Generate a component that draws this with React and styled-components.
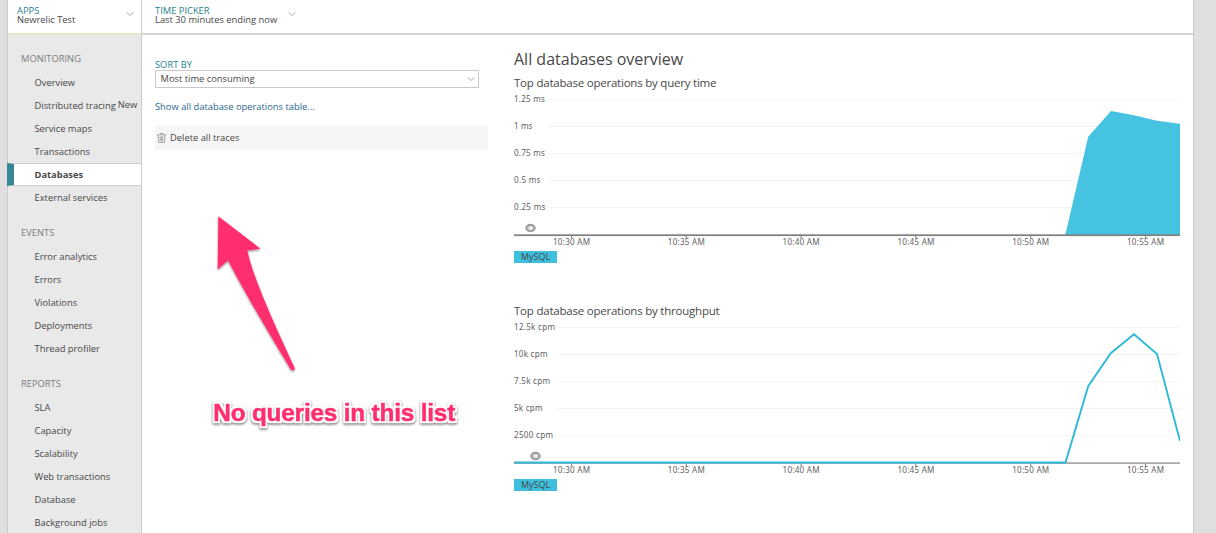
import React from "react";
import styled, { createGlobalStyle, css } from "styled-components";

const GlobalStyle = createGlobalStyle`
  * { box-sizing: border-box; }
  body { margin: 0; background: #dfdfdf; overflow: hidden; }
  body, text { font-family: "Open Sans", "Noto Sans", sans-serif; }
`;

const Page = styled.div`
  display: grid;
  grid-template-columns: 134px 1fr;
  grid-template-rows: 35px 1fr;
  width: 1187px;
  height: 533px;
  margin-left: 7px;
  border: solid #cbcbcb;
  border-width: 0 1px;
  background: #fff;
  color: #484848;
  font-size: 9.35px;
`;

const Picker = styled.header`
  display: flex;
  align-items: flex-start;
  gap: ${(p) => p.$gap}px;
  padding: 6px 0 0 ${(p) => p.$indent}px;
  border-bottom: 2px solid ${(p) => (p.$accent ? "#e2ebc9" : "#d2d2d2")};
  ${(p) => p.$accent && css`border-right: 1px solid #cbcbcb;`}
`;

const PickerText = styled.div`
  width: ${(p) => p.$width}px;
  white-space: nowrap;
`;

const Label = styled.div`
  height: 10px;
  line-height: 10px;
  color: #2a7f90;
  white-space: nowrap;
`;

const PickerValue = styled.div`
  line-height: 8px;
`;

const Chevron = styled.svg`
  display: block;
  width: 8px;
  height: 6px;
  margin-top: ${(p) => p.$top || 0}px;
  margin-left: ${(p) => (p.$top ? -0.5 : 0)}px;
  fill: none;
  stroke: #a8a8a8;
  stroke-width: 1;
`;

const Sidebar = styled.nav`
  background: #e9e9e9;
  border-right: 1px solid #cbcbcb;
  min-height: 0;
`;

const NavHeading = styled.h3`
  height: 36px;
  margin: 0;
  padding: 11px 0 0 13px;
  line-height: 25px;
  font-size: 9.35px;
  font-weight: 400;
  color: #7d7d7d;
`;

const NavItem = styled.a`
  display: flex;
  align-items: center;
  height: 23px;
  padding-left: 26.5px;
  white-space: nowrap;
  ${(p) =>
    p.$active &&
    css`
      margin-left: -1px;
      padding-left: 20.5px;
      border: solid #cfcfcf;
      border-width: 1px 0;
      border-left: 7px solid #358798;
      background: #fff;
      font-weight: 700;
    `}
`;

const NewTag = styled.span`
  margin: -3px 0 0 2px;
`;

const Main = styled.main`
  display: grid;
  grid-template-columns: 333px 666px;
  column-gap: 26px;
  padding-left: 13px;
  min-height: 0;
`;

const ListPane = styled.section`
  padding-top: 25px;
`;

const Select = styled.div`
  display: flex;
  align-items: center;
  justify-content: space-between;
  width: 324px;
  height: 18px;
  padding: 0 3px 1px 4.5px;
  border: 1px solid #c9c9c9;
`;

const Link = styled.a`
  display: block;
  margin-top: 12px;
  height: 14px;
  line-height: 14px;
  color: #2a6791;
`;

const ActionBar = styled.div`
  display: flex;
  align-items: center;
  gap: 4px;
  height: 25px;
  margin-top: 11px;
  padding-left: 2px;
  background: #f6f6f6;
`;

const TrashIcon = styled.svg`
  width: 9px;
  height: 10px;
  fill: none;
  stroke: #949494;
  stroke-width: 0.8;
`;

const Overview = styled.section`
  padding-top: 12px;
`;

const Title = styled.h1`
  height: 25px;
  margin: 0;
  line-height: 24px;
  font-size: 16px;
  font-weight: 400;
`;

const ChartTitle = styled.h2`
  height: 21px;
  margin: 0;
  line-height: 22px;
  font-size: 11.5px;
  letter-spacing: -0.22px;
  font-weight: 400;
  white-space: nowrap;
`;

const ChartBlock = styled.article`
  height: 228px;
`;

const Plot = styled.svg`
  display: block;
  width: 666px;
  height: 158px;
  text {
    font-family: "Noto Sans", sans-serif;
    font-size: 8.1px;
    fill: #626262;
  }
`;

const Legend = styled.div`
  display: flex;
  align-items: center;
  justify-content: center;
  width: 43px;
  height: 12px;
  padding-bottom: 1px;
  background: #3dbfdd;
  font-size: 9px;
`;

const Annotation = styled.svg`
  position: absolute;
  left: 200px;
  top: 205px;
  width: 270px;
  height: 235px;
  pointer-events: none;
`;

const NoteText = styled.text`
  && { font-family: "Liberation Sans", Arial, sans-serif; }
  font-size: 24.3px;
  font-weight: 700;
  fill: #ff2f6e;
  stroke: #ff2f6e;
  stroke-width: 0.5;
`;

const sections = [
  { name: "MONITORING", items: ["Overview", "Distributed tracing", "Service maps", "Transactions", "Databases", "External services"] },
  { name: "EVENTS", items: ["Error analytics", "Errors", "Violations", "Deployments", "Thread profiler"] },
  { name: "REPORTS", items: ["SLA", "Capacity", "Scalability", "Web transactions", "Database", "Background jobs"] },
];

const times = ["10:30 AM", "10:35 AM", "10:40 AM", "10:45 AM", "10:50 AM", "10:55 AM"];

const charts = [
  {
    title: "Top database operations by query time",
    gridStart: 34,
    ringX: 16.5,
    ticks: [["1.25 ms", 31], ["1 ms", 18.5], ["0.75 ms", 31], ["0.5 ms", 26.5], ["0.25 ms", 31.5]],
    area: true,
    points: "551.3,142 574.2,43.8 597,18 620,22.2 643,27.8 666,30.7",
  },
  {
    title: "Top database operations by throughput",
    gridStart: 44,
    ringX: 21.5,
    ticks: [["12.5k cpm", 41], ["10k cpm", 33.5], ["7.5k cpm", 36], ["5k cpm", 28.5], ["2500 cpm", 39]],
    area: false,
    points: "0,141.5 551.5,141.5 574.3,65 597,32 620,13.3 643,33 666,120",
  },
];

function Caret({ top }) {
  return <Chevron $top={top} viewBox="0 0 8 6"><path d="M.7 1.2 4 4.6 7.3 1.2" /></Chevron>;
}

function Chart({ title, ticks, gridStart, ringX, area, points }) {
  return (
    <ChartBlock>
      <ChartTitle>{title}</ChartTitle>
      <Plot viewBox="0 0 666 158">
        {ticks.map(([label, width], i) => (
          <g key={label}>
            <path d={`M${gridStart} ${6.5 + i * 27}H666`} stroke={i % 2 ? "#f3f3f3" : "#f5f5f5"} />
            <text x="0" y={9.2 + i * 27} textLength={width}>{label}</text>
          </g>
        ))}
        {area && <polygon points={points + " 666,142"} fill="#46c3e0" />}
        <rect x="0" y={area ? 141.3 : 141.2} width="666" height="1.8" fill={area ? "#828282" : "#aaa"} />
        {!area && <polyline points={points} fill="none" stroke="#30b8d8" strokeWidth="1.9" />}
        {times.map((time, i) => (
          <g key={time}>
            <path d={`M${57.5 + i * 114.8} 143v2`} stroke="#777" />
            <text x={39 + i * 114.8} y="152.2" textLength="37">{time}</text>
          </g>
        ))}
        <ellipse cx={ringX} cy="135" rx="4.2" ry="3.3" fill="#c9c9c9" stroke="#9b9b9b" strokeWidth="2" />
        <circle cx={ringX + 0.3} cy="135.1" r="1.8" fill="#f2f2f2" />
      </Plot>
      <Legend>MySQL</Legend>
    </ChartBlock>
  );
}

export default function App() {
  return (
    <>
      <GlobalStyle />
      <Page>
        <Picker $accent $indent={9} $gap={9}>
          <PickerText $width={100}>
            <Label>APPS</Label>
            <PickerValue>Newrelic Test</PickerValue>
          </PickerText>
          <Caret top={5} />
        </Picker>
        <Picker $indent={13} $gap={9}>
          <PickerText $width={124}>
            <Label>TIME PICKER</Label>
            <PickerValue>Last 30 minutes ending now</PickerValue>
          </PickerText>
          <Caret top={5} />
        </Picker>
        <Sidebar>
          {sections.map((section) => (
            <div key={section.name}>
              <NavHeading>{section.name}</NavHeading>
              {section.items.map((item) => (
                <NavItem key={item} $active={item === "Databases"}>
                  {item}
                  {item === "Distributed tracing" && <NewTag>New</NewTag>}
                </NavItem>
              ))}
            </div>
          ))}
        </Sidebar>
        <Main>
          <ListPane>
            <Label>SORT BY</Label>
            <Select>Most time consuming<Caret /></Select>
            <Link>Show all database operations table...</Link>
            <ActionBar>
              <TrashIcon viewBox="0 0 9 10">
                <path d="M0 1.8h9M3 1.5V.5h3v1M1 2l.6 7.5h5.8L8 2M3.2 3.3v5M4.5 3.3v5M5.8 3.3v5" />
              </TrashIcon>
              Delete all traces
            </ActionBar>
          </ListPane>
          <Overview>
            <Title>All databases overview</Title>
            {charts.map((chart) => <Chart key={chart.title} {...chart} />)}
          </Overview>
        </Main>
      </Page>
      <Annotation viewBox="200 205 270 235">
        <defs>
          <filter id="arrowShadow" x="-20%" y="-20%" width="140%" height="140%">
            <feDropShadow dx="0" dy="1.3" stdDeviation="1" floodOpacity=".45" />
          </filter>
          <filter id="noteOutline" x="-10%" y="-40%" width="120%" height="200%" colorInterpolationFilters="sRGB">
            <feMorphology in="SourceAlpha" operator="dilate" radius="1.6" result="wide" />
            <feFlood floodColor="#fff" />
            <feComposite in2="wide" operator="in" result="outline" />
            <feDropShadow in="outline" dx="0" dy="1.3" stdDeviation="1" floodOpacity=".55" result="halo" />
            <feMerge>
              <feMergeNode in="halo" />
              <feMergeNode in="SourceGraphic" />
            </feMerge>
          </filter>
        </defs>
        <path
          d="M218.3 216.3 260.5 248.7 247.3 250.5C253 277 273 321 294.5 367.5Q295.3 370 293 370.3 291.5 370.5 290.5 369C267 330 244 291 228 260.5L217.7 269.5Z"
          fill="#ff2f6e"
          filter="url(#arrowShadow)"
        />
        <NoteText x="213.3" y="421" textLength="242" filter="url(#noteOutline)">
          No queries in this list
        </NoteText>
      </Annotation>
    </>
  );
}
